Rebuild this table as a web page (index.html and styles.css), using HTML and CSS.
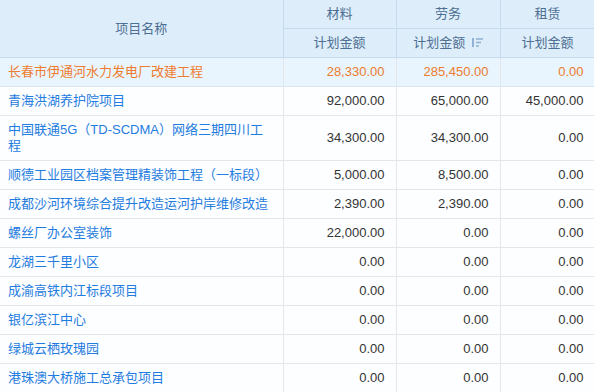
FILE: index.html
```html
<!DOCTYPE html>
<html lang="zh-CN">
<head>
  <meta charset="UTF-8">
  <meta name="viewport" content="width=device-width, initial-scale=1.0">
  <title>项目计划金额</title>
  <link rel="stylesheet" href="styles.css">
</head>
<body>

  <!-- Plan amount table -->
  <table class="plan-table">
    <colgroup>
      <col class="col-name">
      <col class="col-num">
      <col class="col-num2">
      <col class="col-num3">
    </colgroup>
    <thead>
      <tr>
        <th rowspan="2">项目名称</th>
        <th>材料</th>
        <th>劳务</th>
        <th>租赁</th>
      </tr>
      <tr>
        <th>计划金额</th>
        <th>计划金额 <span class="sort-icon"><svg width="12" height="10" viewBox="0 0 12 10"><path d="M2 0v9" stroke="#8eb1d4" stroke-width="2"/><path d="M5 1h7M5 4.5h5M5 8h3" stroke="#8eb1d4" stroke-width="1.6"/></svg></span></th>
        <th>计划金额</th>
      </tr>
    </thead>
    <tbody>
      <tr class="active">
        <td class="name">长春市伊通河水力发电厂改建工程</td>
        <td class="num">28,330.00</td>
        <td class="num">285,450.00</td>
        <td class="num">0.00</td>
      </tr>
      <tr>
        <td class="name">青海洪湖养护院项目</td>
        <td class="num">92,000.00</td>
        <td class="num">65,000.00</td>
        <td class="num">45,000.00</td>
      </tr>
      <tr>
        <td class="name">中国联通5G（TD-SCDMA）网络三期四川工程</td>
        <td class="num">34,300.00</td>
        <td class="num">34,300.00</td>
        <td class="num">0.00</td>
      </tr>
      <tr>
        <td class="name">顺德工业园区档案管理精装饰工程（一标段）</td>
        <td class="num">5,000.00</td>
        <td class="num">8,500.00</td>
        <td class="num">0.00</td>
      </tr>
      <tr>
        <td class="name">成都沙河环境综合提升改造运河护岸维修改造</td>
        <td class="num">2,390.00</td>
        <td class="num">2,390.00</td>
        <td class="num">0.00</td>
      </tr>
      <tr>
        <td class="name">螺丝厂办公室装饰</td>
        <td class="num">22,000.00</td>
        <td class="num">0.00</td>
        <td class="num">0.00</td>
      </tr>
      <tr>
        <td class="name">龙湖三千里小区</td>
        <td class="num">0.00</td>
        <td class="num">0.00</td>
        <td class="num">0.00</td>
      </tr>
      <tr>
        <td class="name">成渝高铁内江标段项目</td>
        <td class="num">0.00</td>
        <td class="num">0.00</td>
        <td class="num">0.00</td>
      </tr>
      <tr>
        <td class="name">银亿滨江中心</td>
        <td class="num">0.00</td>
        <td class="num">0.00</td>
        <td class="num">0.00</td>
      </tr>
      <tr>
        <td class="name">绿城云栖玫瑰园</td>
        <td class="num">0.00</td>
        <td class="num">0.00</td>
        <td class="num">0.00</td>
      </tr>
      <tr>
        <td class="name">港珠澳大桥施工总承包项目</td>
        <td class="num">0.00</td>
        <td class="num">0.00</td>
        <td class="num">0.00</td>
      </tr>
    </tbody>
  </table>

</body>
</html>
```

FILE: styles.css
```css
body {
  margin: 0;
  font-family: 'Liberation Sans', 'Noto Sans CJK SC', sans-serif;
  font-size: 13px;
  background: #fdfeff;
  color: #333;
  overflow: hidden;
}

.plan-table {
  border-collapse: collapse;
  table-layout: fixed;
  width: 595px;
}

.col-name { width: 283px; }
.col-num { width: 113px; }
.col-num2 { width: 104px; }
.col-num3 { width: 95px; }

.plan-table th {
  background: #deedfa;
  color: #4d6f93;
  font-weight: normal;
  height: 28px;
  padding: 0;
  line-height: 16px;
  border: 1px solid #c6dbee;
  border-top: none;
  text-align: center;
}

.plan-table th:first-child {
  border-left: none;
}

.sort-icon {
  display: inline-block;
  margin-left: 2px;
  vertical-align: -1px;
}

.plan-table td {
  height: 16px;
  padding: 6px 11px 6px 8px;
  line-height: 16px;
  border: 1px solid #e4e6e8;
  border-top: none;
}

.plan-table td:first-child {
  border-left: none;
}

.plan-table td.name {
  color: #1f7ce0;
}

.plan-table td.num {
  text-align: right;
}

.plan-table tr.active td {
  background: #e8f4fe;
  color: #ee7b2e;
  border-bottom-color: #d9e6f2;
}
```
